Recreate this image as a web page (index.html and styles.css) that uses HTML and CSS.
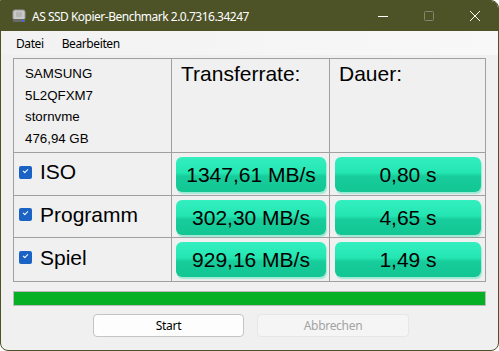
FILE: index.html
```html
<!DOCTYPE html>
<html lang="de">
<head>
  <meta charset="UTF-8" />
  <title>AS SSD Kopier-Benchmark</title>
  <link rel="stylesheet" href="styles.css">
</head>
<body>
  <div class="window">
    <div class="titlebar">
      <svg class="app-icon" width="14" height="14" viewBox="0 0 14 14">
        <rect x="1" y="1" width="12" height="10" rx="2" fill="#c9c9c9" stroke="#9a9a9a"/>
        <rect x="4" y="3" width="6" height="5" rx="1" fill="#b5b5b5"/>
        <rect x="1" y="10" width="12" height="3" fill="#6a6a6a"/>
        <rect x="10" y="11" width="2" height="1.5" fill="#2f6fff"/>
      </svg>
      <span class="title">AS SSD Kopier-Benchmark 2.0.7316.34247</span>
      <div class="controls">
        <span class="ctl">
          <svg width="12" height="12" viewBox="0 0 12 12"><path d="M1 6.5h10" stroke="#fff" stroke-width="1"/></svg>
        </span>
        <span class="ctl">
          <svg width="12" height="12" viewBox="0 0 12 12"><rect x="1.5" y="1.5" width="9" height="9" rx="1" fill="none" stroke="#83866a"/></svg>
        </span>
        <span class="ctl">
          <svg width="12" height="12" viewBox="0 0 12 12"><path d="M1 1L11 11M11 1L1 11" stroke="#fff" stroke-width="1"/></svg>
        </span>
      </div>
    </div>

    <div class="menubar">
      <span class="menu-item">Datei</span>
      <span class="menu-item">Bearbeiten</span>
    </div>

    <div class="content">
      <div class="grid">
        <div class="cell info">
          <div>SAMSUNG</div>
          <div>5L2QFXM7</div>
          <div>stornvme</div>
          <div>476,94 GB</div>
        </div>
        <div class="cell head">Transferrate:</div>
        <div class="cell head">Dauer:</div>

        <div class="cell label"><span class="check"></span>ISO</div>
        <div class="cell"><div class="value rate">1347,61 MB/s</div></div>
        <div class="cell"><div class="value time">0,80 s</div></div>

        <div class="cell label"><span class="check"></span>Programm</div>
        <div class="cell"><div class="value rate">302,30 MB/s</div></div>
        <div class="cell"><div class="value time">4,65 s</div></div>

        <div class="cell label"><span class="check"></span>Spiel</div>
        <div class="cell"><div class="value rate">929,16 MB/s</div></div>
        <div class="cell"><div class="value time">1,49 s</div></div>
      </div>

      <div class="progress"><div class="progress-fill"></div></div>

      <div class="buttons">
        <button class="btn">Start</button>
        <button class="btn disabled">Abbrechen</button>
      </div>
    </div>
  </div>
</body>
</html>
```

FILE: styles.css
```css
body {
  margin: 0;
  background: #ffffff;
}

.window {
  width: 497px;
  height: 349px;
  border: 1px solid #4d5227;
  border-radius: 0 8px 8px 8px;
  overflow: hidden;
  background: #f0f0f0;
  font-family: "Liberation Sans", Arial, sans-serif;
}

.titlebar {
  height: 30px;
  background: #4d5227;
  display: flex;
  align-items: center;
  color: #fff;
}

.app-icon {
  margin-left: 11px;
  margin-right: 6px;
}

.title {
  font-family: "Noto Sans", sans-serif;
  font-size: 12px;
  letter-spacing: -0.5px;
}

.controls {
  margin-left: auto;
  display: flex;
}

.ctl {
  width: 46px;
  height: 30px;
  display: flex;
  align-items: center;
  justify-content: center;
}

.menubar {
  height: 24px;
  background: linear-gradient(to right, #f2f2f2, #f8f8f8);
  display: flex;
  align-items: center;
  padding-left: 8px;
  font-family: "Noto Sans", sans-serif;
  font-size: 12px;
  letter-spacing: -0.4px;
  color: #000;
}

.menu-item {
  padding: 0 7px;
  margin-right: 4px;
}

.content {
  padding: 3px 0 0 12px;
}

.grid {
  width: 473px;
  display: grid;
  grid-template-columns: 157px 157px 155px;
  grid-template-rows: 93px 42px 41px 43px;
  gap: 1px;
  padding: 1px;
  box-sizing: border-box;
  background: #a0a0a0;
}

.cell {
  background: #f0f0f0;
  box-sizing: border-box;
}

.info {
  padding: 4px 0 0 11px;
  font-size: 13.3px;
  line-height: 21.7px;
  color: #000;
}

.head {
  padding: 3px 0 0 9px;
  font-size: 21px;
}

.label {
  display: flex;
  align-items: center;
  padding-left: 5px;
  padding-bottom: 4px;
  font-size: 21px;
}

.check {
  width: 13px;
  height: 13px;
  border-radius: 2px;
  background: #1a62c4;
  margin-right: 8px;
  position: relative;
}

.check::after {
  content: "";
  position: absolute;
  left: 4px;
  top: 3px;
  width: 4px;
  height: 2px;
  border-left: 1px solid #fff;
  border-bottom: 1px solid #fff;
  transform: rotate(-45deg);
}

.value {
  height: 35px;
  margin-top: 4px;
  border-radius: 6px;
  background: linear-gradient(#34efc0 0%, #24e6b2 45%, #17cd9b 55%, #13c694 100%);
  box-shadow: 1px 2px 1px rgba(60, 225, 180, 0.45);
  display: flex;
  align-items: center;
  justify-content: center;
  font-size: 21px;
  color: #000;
}

.rate {
  margin-left: 4px;
  width: 150px;
}

.time {
  margin-left: 5px;
  width: 146px;
}

.progress {
  width: 473px;
  height: 15px;
  margin-top: 9px;
  border: 1px solid #bcbcbc;
  box-sizing: border-box;
  background: #e6e6e6;
}

.progress-fill {
  height: 100%;
  background: #06b025;
}

.buttons {
  display: flex;
  gap: 13px;
  margin-top: 8px;
  padding-left: 80px;
}

.btn {
  width: 151px;
  height: 23px;
  border: 1px solid #c4c4c4;
  border-radius: 4px;
  background: #fdfdfd;
  font-family: "Noto Sans", sans-serif;
  font-size: 12px;
  letter-spacing: -0.3px;
  color: #000;
  padding: 0;
}

.btn.disabled {
  width: 152px;
  background: #f5f5f5;
  border-color: #e6e6e6;
  color: #a3a3a3;
}
```
